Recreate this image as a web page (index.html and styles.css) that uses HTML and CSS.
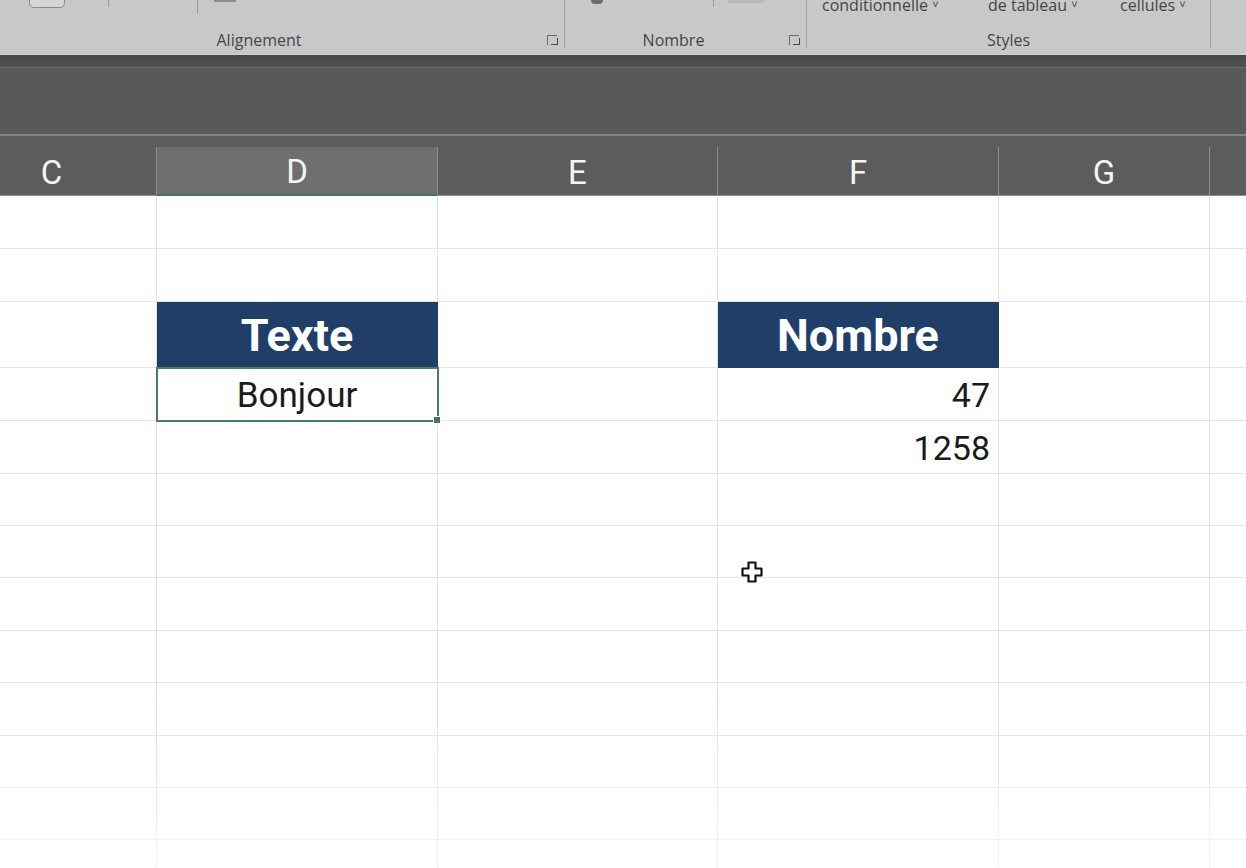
FILE: index.html
```html
<!DOCTYPE html>
<html lang="fr">
<head>
    <meta charset="UTF-8">
    <meta name="viewport" content="width=device-width, initial-scale=1.0">
    <title>Classeur - Excel</title>
    <link rel="stylesheet" href="styles.css">
</head>
<body>
    <!-- Ribbon (only the bottom of it is visible) -->
    <div class="ribbon">
        <div class="group group-align">
            <div class="tools">
                <span class="tool-box"></span>
                <span class="tool-sep short"></span>
                <span class="tool-sep"></span>
                <span class="tool-dash"></span>
            </div>
            <div class="group-label">Alignement</div>
            <span class="launcher"></span>
        </div>
        <div class="group group-number">
            <div class="tools">
                <span class="tool-blob"></span>
                <span class="tool-sep short"></span>
                <span class="tool-faint"></span>
            </div>
            <div class="group-label">Nombre</div>
            <span class="launcher"></span>
        </div>
        <div class="group group-styles">
            <div class="tools">
                <span class="tool-text cond">conditionnelle <i class="chev">&#709;</i></span>
                <span class="tool-text table">de tableau <i class="chev">&#709;</i></span>
                <span class="tool-text">cellules <i class="chev">&#709;</i></span>
            </div>
            <div class="group-label">Styles</div>
        </div>
        <div class="group group-rest"></div>
    </div>

    <!-- Formula bar area -->
    <div class="dark-band">
        <div class="band-top"></div>
    </div>

    <div class="sheet">
        <div class="col-heads">
            <div class="col-head">C</div>
            <div class="col-head selected">D</div>
            <div class="col-head">E</div>
            <div class="col-head">F</div>
            <div class="col-head">G</div>
            <div class="col-head"></div>
        </div>

        <div class="row"><div class="cell"></div><div class="cell"></div><div class="cell"></div><div class="cell"></div><div class="cell"></div><div class="cell"></div></div>
        <div class="row"><div class="cell"></div><div class="cell"></div><div class="cell"></div><div class="cell"></div><div class="cell"></div><div class="cell"></div></div>
        <div class="row row-title">
            <div class="cell"></div>
            <div class="cell head-cell">Texte</div>
            <div class="cell"></div>
            <div class="cell head-cell">Nombre</div>
            <div class="cell"></div>
            <div class="cell"></div>
        </div>
        <div class="row">
            <div class="cell"></div>
            <div class="cell text-cell active">Bonjour<span class="fill-handle"></span></div>
            <div class="cell"></div>
            <div class="cell num-cell">47</div>
            <div class="cell"></div>
            <div class="cell"></div>
        </div>
        <div class="row">
            <div class="cell"></div>
            <div class="cell"></div>
            <div class="cell"></div>
            <div class="cell num-cell">1258</div>
            <div class="cell"></div>
            <div class="cell"></div>
        </div>
        <div class="row short"><div class="cell"></div><div class="cell"></div><div class="cell"></div><div class="cell"></div><div class="cell"></div><div class="cell"></div></div>
        <div class="row short"><div class="cell"></div><div class="cell"></div><div class="cell"></div><div class="cell"></div><div class="cell"></div><div class="cell"></div></div>
        <div class="row"><div class="cell"></div><div class="cell"></div><div class="cell"></div><div class="cell"></div><div class="cell"></div><div class="cell"></div></div>
        <div class="row short"><div class="cell"></div><div class="cell"></div><div class="cell"></div><div class="cell"></div><div class="cell"></div><div class="cell"></div></div>
        <div class="row"><div class="cell"></div><div class="cell"></div><div class="cell"></div><div class="cell"></div><div class="cell"></div><div class="cell"></div></div>
        <div class="row short"><div class="cell"></div><div class="cell"></div><div class="cell"></div><div class="cell"></div><div class="cell"></div><div class="cell"></div></div>
        <div class="row short"><div class="cell"></div><div class="cell"></div><div class="cell"></div><div class="cell"></div><div class="cell"></div><div class="cell"></div></div>
        <div class="row"><div class="cell"></div><div class="cell"></div><div class="cell"></div><div class="cell"></div><div class="cell"></div><div class="cell"></div></div>
    </div>

    <!-- Excel "fat cross" mouse pointer -->
    <svg class="pointer" width="22" height="22" viewBox="0 0 22 22">
        <path d="M7.5 1.5h7v6h6v7h-6v6h-7v-6h-6v-7h6z" fill="#fff" stroke="#111" stroke-width="2.2" stroke-linejoin="round"/>
    </svg>

    <div class="fade"></div>
</body>
</html>
```

FILE: styles.css
```css
body {
    margin: 0;
    background: #fff;
    font-family: Roboto, "Liberation Sans", sans-serif;
    overflow: hidden;
}

/* ---------- ribbon ---------- */

.ribbon {
    display: flex;
    height: 54px;
    background: #c8c8c8;
    border-bottom: 1px solid #d2d2d2;
    font-family: "Open Sans", "Liberation Sans", sans-serif;
    color: #454545;
}

.group {
    position: relative;
    display: flex;
    flex-direction: column;
    justify-content: space-between;
    border-right: 1px solid #a3a3a3;
    height: 48px;
    box-sizing: border-box;
}

.group-align {
    width: 565px;
    padding-right: 46px;
}

.group-number {
    width: 242px;
    padding-right: 24px;
}

.group-styles {
    width: 404px;
}

.group-rest {
    flex: 1;
    border-right: none;
}

.group-label {
    text-align: center;
    font-size: 16px;
    line-height: 20px;
    margin-bottom: -2px;
}

.tools {
    display: flex;
    align-items: flex-start;
    height: 16px;
}

.tool-box {
    width: 34px;
    height: 20px;
    margin: -14px 0 0 29px;
    border: 1px solid #8a8a8a;
    border-radius: 5px;
    background: #d6d6d6;
}

.tool-sep {
    width: 1px;
    height: 14px;
    background: #9c9c9c;
    margin-left: 88px;
}

.tool-sep.short {
    height: 7px;
    margin-left: 43px;
}

.group-number .tool-sep.short {
    margin-left: 110px;
}

.tool-dash {
    width: 22px;
    height: 2px;
    background: #8c8c8c;
    margin-left: 16px;
}

.tool-blob {
    width: 12px;
    height: 4px;
    border-radius: 0 0 6px 6px;
    background: #6d6d6d;
    margin-left: 26px;
}

.tool-faint {
    width: 36px;
    height: 3px;
    background: #b9b9b9;
    margin-left: 14px;
}

.tool-text {
    font-size: 16px;
    line-height: 16px;
    margin-top: -4px;
    white-space: nowrap;
}

.tool-text.cond {
    width: 166px;
    margin-left: 15px;
}

.tool-text.table {
    width: 132px;
}

.chev {
    font-style: normal;
    font-size: 11px;
    vertical-align: 3px;
}

.launcher {
    position: absolute;
    right: 7px;
    bottom: 3px;
    width: 9px;
    height: 9px;
    border-left: 1px solid #6a6a6a;
    border-top: 1px solid #6a6a6a;
}

.launcher::after {
    content: "";
    position: absolute;
    right: -1px;
    bottom: 0;
    width: 6px;
    height: 6px;
    border-right: 1.5px solid #4a4a4a;
    border-bottom: 1.5px solid #4a4a4a;
}

/* ---------- dark formula area ---------- */

.dark-band {
    height: 79px;
    background: #595959;
    border-bottom: 2px solid #858585;
}

.band-top {
    height: 12px;
    background: linear-gradient(#474747, #525252);
    border-bottom: 1px solid #6c6c6c;
}

/* ---------- sheet ---------- */

.sheet {
    margin-left: -53px;
}

.col-heads,
.row {
    display: grid;
    grid-template-columns: 210px 281px 280px 281px 211px 220px;
}

.col-heads {
    background: #5c5c5c;
    padding-top: 11px;
}

.col-head {
    height: 49px;
    box-sizing: border-box;
    border-right: 1px solid #8f8f8f;
    border-bottom: 1px solid #8f8f8f;
    color: #f4f4f4;
    font-size: 33px;
    padding-top: 2px;
    display: flex;
    align-items: center;
    justify-content: center;
}

.col-head.selected {
    background: #6f6f6f;
    border-bottom: 2px solid #3f7a57;
}

.row {
    height: 53px;
}

.row.short {
    height: 52px;
}

.row.row-title {
    height: 66px;
}

.cell {
    box-sizing: border-box;
    border-right: 1px solid #e3e3e3;
    border-bottom: 1px solid #e6e6e6;
    display: flex;
    align-items: center;
    font-size: 34px;
    padding-top: 2px;
    color: #1b1b1b;
}

.head-cell {
    background: #1f3f68;
    border-color: #1f3f68;
    color: #fff;
    font-weight: 700;
    font-size: 45px;
    justify-content: center;
}

.text-cell {
    justify-content: center;
    font-size: 35px;
}

.num-cell {
    justify-content: flex-end;
    padding-right: 8px;
}

.active {
    position: relative;
    outline: 2px solid #4a7e60;
    outline-offset: -1px;
}

.fill-handle {
    position: absolute;
    right: -4px;
    bottom: -4px;
    width: 6px;
    height: 6px;
    background: #3f7a57;
    border: 1px solid #fff;
}

/* ---------- overlays ---------- */

.pointer {
    position: absolute;
    left: 741px;
    top: 561px;
}

.fade {
    position: fixed;
    left: 0;
    right: 0;
    bottom: 0;
    height: 170px;
    background: linear-gradient(rgba(255, 255, 255, 0), rgba(255, 255, 255, 0.55));
    pointer-events: none;
}
```
